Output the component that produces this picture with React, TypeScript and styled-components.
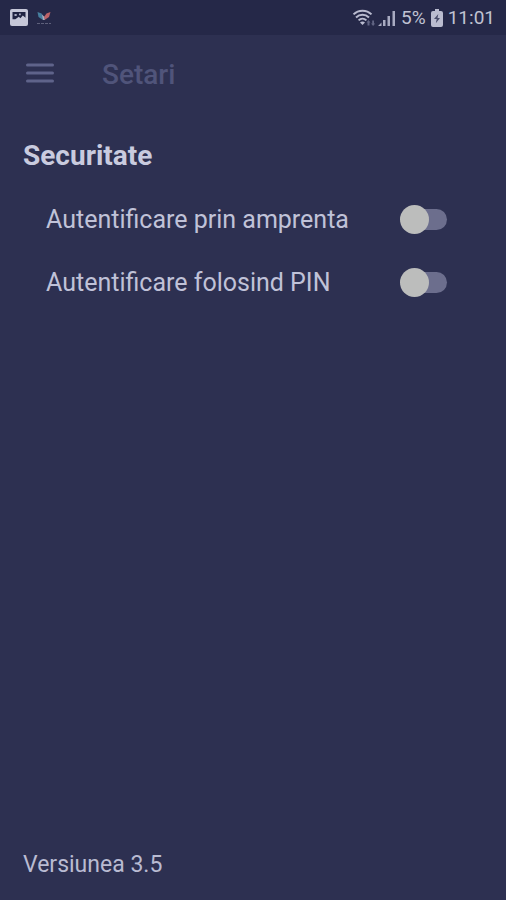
import React from "react";
import styled, { createGlobalStyle } from "styled-components";

const GlobalStyle = createGlobalStyle`
  *, *::before, *::after { box-sizing: border-box; }
  body {
    margin: 0;
    background: #2d3051;
    font-family: Roboto, "Liberation Sans", sans-serif;
    color: #c0c2d8;
  }
`;

const Screen = styled.div`
  display: flex;
  flex-direction: column;
  min-height: 100vh;
`;

const StatusBar = styled.div`
  display: flex;
  align-items: center;
  justify-content: space-between;
  height: 35px;
  padding: 0 11px 0 10px;
  background: #252848;
  color: #c0c2d2;
`;

const StatusGroup = styled.div<{ $gap: number }>`
  display: flex;
  align-items: center;
  gap: ${(p) => p.$gap}px;
  svg { display: block; }
`;

const StatusText = styled.span`
  font-size: 19px;
  line-height: 24px;
`;

const AppBar = styled.header`
  display: flex;
  align-items: center;
  gap: 46px;
  height: 80px;
  padding: 0 24px;
`;

const MenuButton = styled.button`
  display: flex;
  margin: 0 0 4px;
  padding: 2px;
  border: 0;
  background: none;
  color: #5f638a;
  cursor: pointer;
`;

const Title = styled.h1`
  margin: 0;
  font-size: 28px;
  line-height: 32px;
  font-weight: 500;
  color: #50547a;
`;

const Content = styled.main`
  flex: 1;
  padding: 25px 23px 0;
`;

const SectionTitle = styled.h2`
  margin: 0 0 16px;
  font-size: 28px;
  line-height: 32px;
  font-weight: 700;
  color: #c9cbdf;
`;

const SettingRow = styled.label`
  display: flex;
  align-items: center;
  justify-content: space-between;
  height: 63px;
  padding: 0 36px 0 23px;
  font-size: 25px;
  line-height: 32px;
  cursor: pointer;
`;

const Switch = styled.input`
  appearance: none;
  display: flex;
  align-items: center;
  flex: none;
  position: relative;
  isolation: isolate;
  width: 47px;
  height: 29px;
  margin: 0;
  cursor: pointer;

  &::before {
    content: "";
    position: absolute;
    z-index: -1;
    left: 2px;
    right: 0;
    height: 21px;
    border-radius: 11px;
    background: #6c6e8d;
  }

  &::after {
    content: "";
    width: 29px;
    height: 29px;
    border-radius: 50%;
    background: #bcbdbc;
  }

  &:checked { justify-content: flex-end; }
`;

const Footer = styled.footer`
  padding: 0 23px 21px;
  font-size: 23px;
  line-height: 28px;
  color: #b9bbd2;
`;

const PictureIcon = () => (
  <svg width="18" height="17" viewBox="0 0 18 17" aria-hidden="true">
    <rect width="18" height="17" rx="2" fill="#c6c7d8" />
    <path d="M2.5 3h13v5.8l-2.7-2.2-2.4 2.7-1.6-1.5-3.5 2.4H2.5z" fill="#202342" />
    <path d="M4.5 5h2.2v2H4.5zM9 4.4h1.8v1.8H9z" fill="#aaacc2" />
  </svg>
);

const BrandIcon = () => (
  <svg width="16" height="16" viewBox="0 0 16 16" aria-hidden="true">
    <path d="M1.5 2l4 1.5 2.5 4-1 2.5-4.5-3z" fill="#467f9f" />
    <path d="M14.5 2l-4 1.5L8 7l.5 3 4.5-3z" fill="#bd6267" />
    <path d="M6 4.5l2 2 .8 3.5H7z" fill="#a8adc0" />
    <path d="M1 13.5h14" stroke="#5e607b" strokeWidth="1" strokeDasharray="3 1" />
  </svg>
);

const WifiIcon = () => (
  <svg width="24" height="18" viewBox="0 0 24 18" fill="none" aria-hidden="true">
    <g stroke="#b9bbcf" strokeWidth="2">
      <path d="M1.5 5.4C6.5.4 14.5.4 19.5 5.4" />
      <path d="M4 8.4c3.8-3.6 9.2-3.6 13 0" />
      <path d="M6.6 11.4c2.3-2.2 5.5-2.2 7.8 0" />
    </g>
    <path d="M8 13.4c1.4-1.3 3.6-1.3 5 0L10.500 16z" fill="#b9bbcf" />
    <path d="M14.500 13.500l2-2.500 2 2.500h-1v3h-2v-3zM19 14.500h1.200v-3h1.800v3h1.200l-2.100 2.500z" fill="#626584" />
  </svg>
);

const SignalIcon = () => (
  <svg width="18" height="18" viewBox="0 0 18 18" aria-hidden="true">
    <path d="M0 17l3.500-3.500V17zM5 11h2.500v6H5zM9.500 7H12v10H9.500zM14.500 2H17v15h-2.500z" fill="#a9abc2" />
  </svg>
);

const BatteryIcon = () => (
  <svg width="12" height="18" viewBox="0 0 12 18" aria-hidden="true">
    <path d="M4 0h4v2h2a2 2 0 0 1 2 2v12a2 2 0 0 1-2 2H2a2 2 0 0 1-2-2V4a2 2 0 0 1 2-2h2z" fill="#babccf" />
    <path d="M7.3 5L3 10h2.700l-.9 4.300L9 9H6.500z" fill="#484b69" />
  </svg>
);

const MenuIcon = () => (
  <svg width="28" height="20" viewBox="0 0 28 20" aria-hidden="true">
    <path d="M1.500 2h25M1.500 10h25M1.500 18h25" stroke="currentColor" strokeWidth="3" strokeLinecap="round" />
  </svg>
);

const settings = [
  { id: "fingerprint", label: "Autentificare prin amprenta" },
  { id: "pin", label: "Autentificare folosind PIN" },
];

export default function App() {
  return (
    <Screen>
      <GlobalStyle />
      <StatusBar>
        <StatusGroup $gap={8}>
          <PictureIcon />
          <BrandIcon />
        </StatusGroup>
        <StatusGroup $gap={5}>
          <StatusGroup $gap={2}>
            <WifiIcon />
            <SignalIcon />
          </StatusGroup>
          <StatusText>5%</StatusText>
          <BatteryIcon />
          <StatusText>11:01</StatusText>
        </StatusGroup>
      </StatusBar>
      <AppBar>
        <MenuButton type="button" aria-label="Meniu">
          <MenuIcon />
        </MenuButton>
        <Title>Setari</Title>
      </AppBar>
      <Content>
        <SectionTitle>Securitate</SectionTitle>
        {settings.map((s) => (
          <SettingRow key={s.id} htmlFor={s.id}>
            {s.label}
            <Switch type="checkbox" role="switch" id={s.id} />
          </SettingRow>
        ))}
      </Content>
      <Footer>Versiunea 3.5</Footer>
    </Screen>
  );
}
